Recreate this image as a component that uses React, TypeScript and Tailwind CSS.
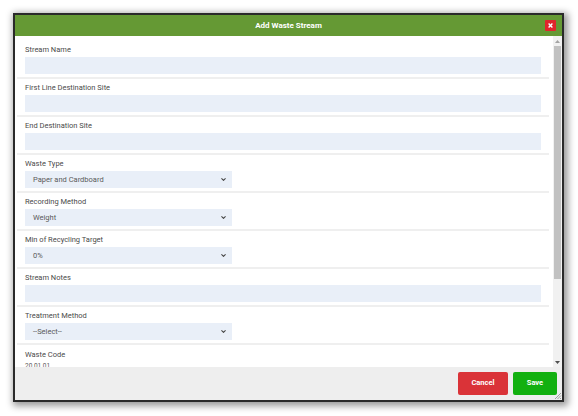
import { ChevronDown } from "lucide-react";

type Field = {
  label: string;
  kind: "input" | "select";
  value?: string;
};

const fields: Field[] = [
  { label: "Stream Name", kind: "input" },
  { label: "First Line Destination Site", kind: "input" },
  { label: "End Destination Site", kind: "input" },
  { label: "Waste Type", kind: "select", value: "Paper and Cardboard" },
  { label: "Recording Method", kind: "select", value: "Weight" },
  { label: "Min of Recycling Target", kind: "select", value: "0%" },
  { label: "Stream Notes", kind: "input" },
  { label: "Treatment Method", kind: "select", value: "--Select--" },
];

const FormRow = ({ field }: { field: Field }) => (
  <div className="ml-[2px] mr-[4px] px-[8px] pt-[3px] pb-[3px] border-b-2 border-[#efefef]">
    <div className="text-[7.5px] leading-[12px] text-[#4a4a4a]">{field.label}</div>
    {field.kind === "input" ? (
      <div className="mt-[1px] h-[17px] bg-[#e9eff8]" />
    ) : (
      <div className="mt-[1px] h-[17px] w-[207px] bg-[#e9eff8] flex items-center justify-between pl-[8px] pr-[5px]">
        <span className="text-[7.5px] text-[#5a5a5a]">{field.value}</span>
        <ChevronDown size={7} strokeWidth={3.5} className="text-[#444]" />
      </div>
    )}
  </div>
);

const App = () => {
  return (
    <div className="w-[578px] h-[416px] bg-white pt-[13px] pl-[13px] font-['Roboto',_'Liberation_Sans',_sans-serif]">
      <div className="w-[551px] h-[389px] border-2 border-[#2a2a2a] bg-white flex flex-col shadow-[2px_2px_7px_2px_rgba(0,0,0,0.4)]">
        {/* header */}
        <div className="h-[21px] shrink-0 bg-[#659934] relative flex items-center justify-center">
          <span className="text-white text-[8px] font-bold">Add Waste Stream</span>
          <button className="absolute right-[6px] top-[5px] w-[11px] h-[11px] bg-[#e0262c] rounded-[1px] flex items-center justify-center">
            <svg width="5" height="5" viewBox="0 0 5 5">
              <path d="M0.6 0.6 L4.4 4.4 M4.4 0.6 L0.6 4.4" stroke="white" strokeWidth="1.4" />
            </svg>
          </button>
        </div>

        {/* body */}
        <div className="flex-1 flex min-h-0">
          <div className="flex-1 overflow-hidden pt-[5px]">
            {fields.map((f) => (
              <FormRow key={f.label} field={f} />
            ))}
            <div className="ml-[2px] px-[8px] pt-[4px]">
              <div className="text-[7.5px] leading-[12px] text-[#4a4a4a]">Waste Code</div>
              <div className="text-[6.5px] leading-[10px] text-[#5a5a5a]">20 01 01</div>
            </div>
          </div>
          {/* scrollbar */}
          <div className="w-[9px] bg-[#f1f1f1] flex flex-col items-center">
            <div className="h-[10px] flex items-center justify-center">
              <svg width="5" height="3" viewBox="0 0 5 3">
                <path d="M0 3 L2.5 0 L5 3 Z" fill="#a3a3a3" />
              </svg>
            </div>
            <div className="w-[7px] h-[233px] bg-[#c1c1c1]" />
            <div className="flex-1" />
            <div className="h-[10px] flex items-center justify-center">
              <svg width="5" height="3" viewBox="0 0 5 3">
                <path d="M0 0 L5 0 L2.5 3 Z" fill="#505050" />
              </svg>
            </div>
          </div>
        </div>

        {/* footer */}
        <div className="h-[33px] shrink-0 bg-[#eeeeee] relative flex items-center justify-end gap-[5px] pr-[5px] pb-[1px]">
          <button className="w-[50px] h-[23px] bg-[#da3338] text-white text-[7.5px] font-bold rounded-[2px]">
            Cancel
          </button>
          <button className="w-[44px] h-[23px] bg-[#12b010] text-white text-[7.5px] font-bold rounded-[2px]">
            Save
          </button>
          <svg className="absolute right-0 bottom-0" width="8" height="8" viewBox="0 0 8 8">
            <path d="M7 1 L1 7 M7 3.5 L3.5 7 M7 6 L6 7" stroke="#8a8a8a" strokeWidth="0.8" />
          </svg>
        </div>
      </div>
    </div>
  );
};

export default App;
